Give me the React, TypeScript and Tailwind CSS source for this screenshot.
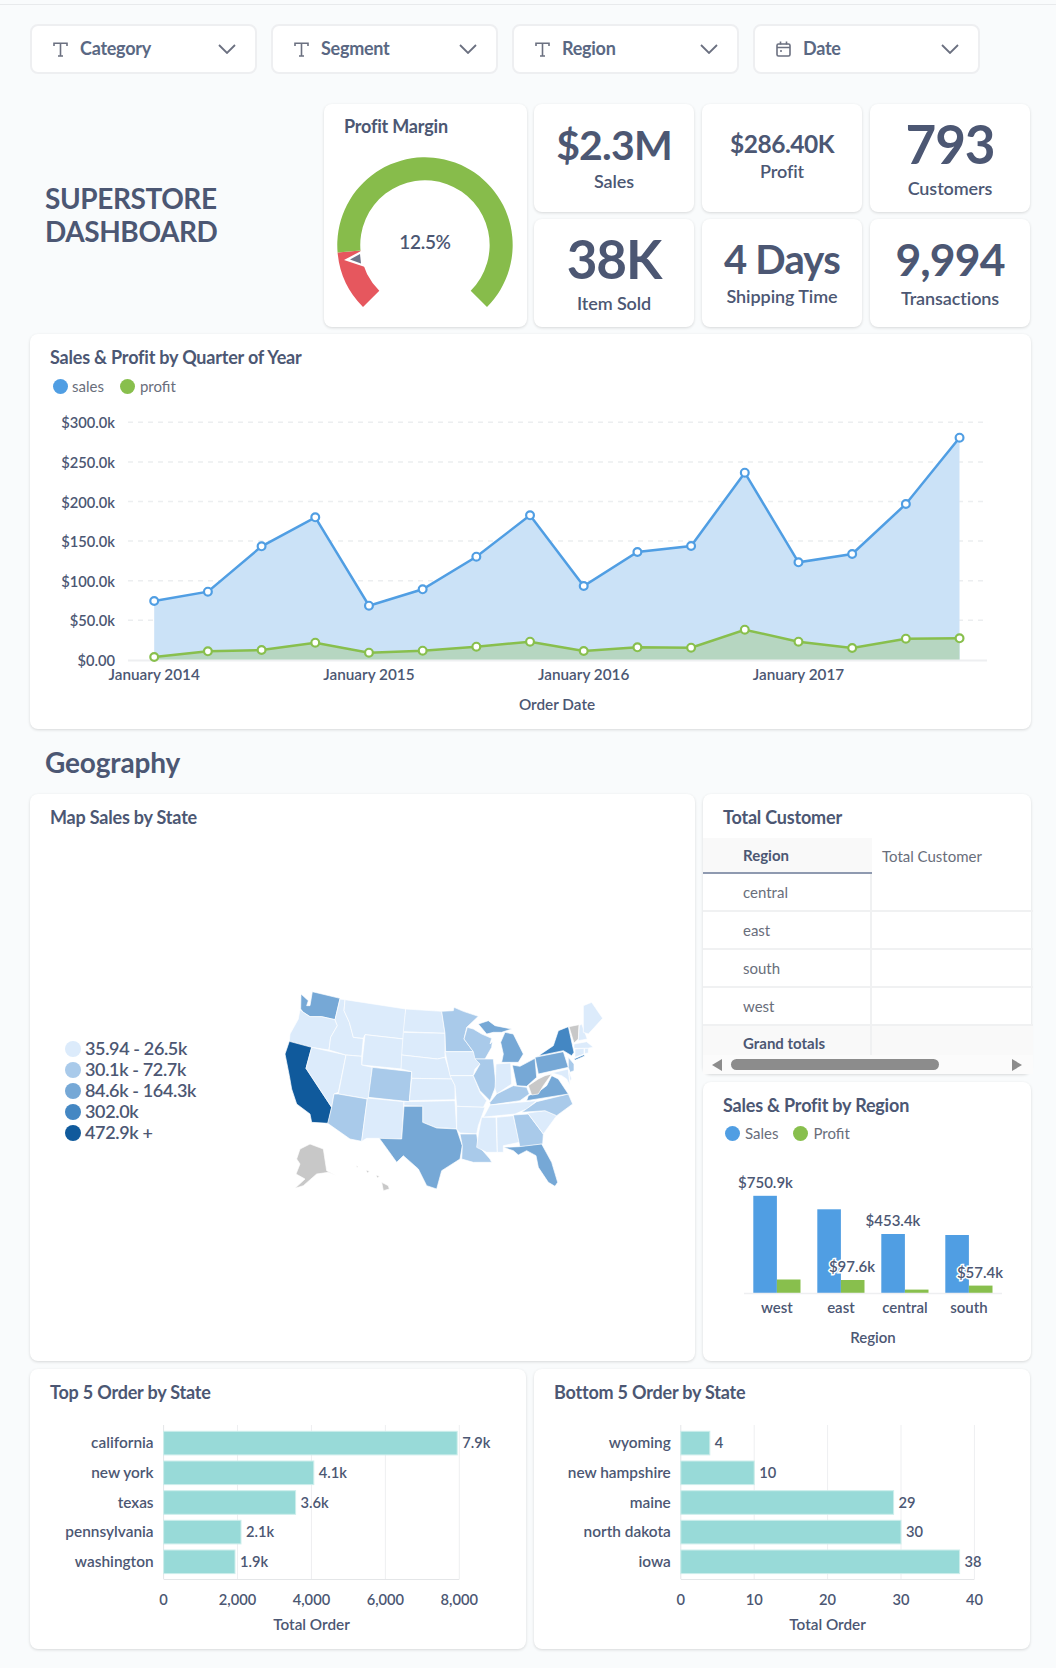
import type { ReactNode } from 'react';

const INK = '#4c5773';
const L1 = '#dcebfb';
const L2 = '#a9caea';
const L3 = '#76a8d6';
const L4 = '#4487c3';
const L5 = '#105a9c';
const NA = '#c8c8c8';

const states: [string, string][] = [
  ['123,45 145,65 140,80 150,80 157,38 240,58 225,122 185,113 150,113 130,100 122,90', L3],
  ['120,92 130,100 150,113 185,113 225,122 232,140 212,175 207,213 155,205 88,187 90,165 115,120', L1],
  ['88,187 155,205 138,268 215,385 205,433 155,430 150,405 110,375 95,330 88,290 75,225', L5],
  ['155,205 258,228 235,340 222,345 215,385 138,268', L1],
  ['240,60 255,62 252,95 268,130 280,175 310,178 305,232 258,228 207,213 212,175 232,140 225,122', L1],
  ['255,62 437,90 432,180 315,167 310,178 280,175 268,130 252,95', L1],
  ['315,167 430,180 425,270 305,258', L1],
  ['258,228 305,232 305,258 337,265 325,360 235,345', L1],
  ['235,345 322,360 305,487 270,480 203,433 215,385 222,345', L2],
  ['337,265 455,278 448,368 325,355', L2],
  ['322,357 432,368 425,480 358,478 320,478 305,487', L1],
  ['437,90 545,97 555,163 430,158', L1],
  ['430,160 555,163 555,235 532,240 425,228', L1],
  ['425,228 532,240 555,235 575,300 455,298 455,278 423,270', L1],
  ['455,298 575,300 585,320 585,362 448,365', L1],
  ['432,368 585,365 590,450 560,447 530,447 488,430 488,382 432,380', L1],
  ['432,382 488,382 488,430 530,447 590,450 607,500 600,540 545,575 530,630 500,620 475,570 430,530 410,550 385,515 358,478 425,480', L3],
  ['545,97 580,95 582,85 610,97 655,112 620,145 612,180 640,218 557,218 555,163', L2],
  ['555,218 640,218 660,255 645,270 640,290 570,290', L1],
  ['570,290 640,290 660,340 680,365 670,385 590,382 585,320', L1],
  ['590,382 675,385 655,440 650,465 600,462 590,450', L1],
  ['600,465 650,465 655,500 690,540 695,550 640,550 605,540 607,500', L2],
  ['622,145 640,150 665,165 695,178 690,195 697,188 695,205 675,240 645,240 640,218 612,180', L2],
  ['645,240 700,240 708,320 690,365 660,335 640,290 660,255', L2],
  ['655,135 685,125 705,140 755,150 725,160 700,160 680,165', L3],
  ['735,160 760,165 775,195 780,205 790,225 775,250 725,250 730,225 722,190', L3],
  ['708,255 752,252 755,315 710,345 705,330', L1],
  ['757,258 780,262 825,238 830,295 800,322 770,320', L3],
  ['690,370 710,345 760,320 800,325 808,345 780,365 690,378', L2],
  ['670,415 690,378 830,365 800,390 765,405 665,415', L1],
  ['665,415 708,415 712,520 680,520 650,505 655,465', L1],
  ['710,415 760,410 778,490 730,500 730,520 712,520', L1],
  ['760,408 805,405 850,465 848,495 780,505', L2],
  ['730,505 778,503 845,495 875,550 893,610 885,622 865,610 835,565 828,530 800,515 775,528 760,515', L3],
  ['803,402 855,395 890,410 850,465', L1],
  ['785,400 830,368 925,345 938,375 890,410 855,395', L2],
  ['800,365 805,350 840,335 860,320 875,290 895,300 925,345', L3],
  ['805,320 835,300 855,290 875,285 850,320 835,345 815,348', NA],
  ['825,235 910,218 925,265 835,285', L3],
  ['840,227 880,200 895,155 925,143 942,220 935,230 910,215 838,230', L4],
  ['942,240 972,227 974,231 946,243', L4],
  ['927,143 957,137 955,180 942,192', NA],
  ['958,140 965,135 982,180 955,185', L1],
  ['970,160 970,80 995,70 1028,118 985,165', L1],
  ['942,195 980,188 1000,205 982,208 942,208', L1],
  ['945,210 972,208 972,225 945,235', L1],
  ['974,208 985,208 985,222 974,224', L1],
  ['925,235 942,255 942,275 930,280 925,265', L2],
  ['850,288 925,270 930,320 920,300 905,290 880,283', L1],
  ['925,270 935,300 930,305', L1],
  ['120,510 150,495 190,510 200,575 260,605 230,590 205,580 170,585 130,620 105,628 135,600 108,585 120,555 110,540', NA],
  ['365,610 385,620 388,630 370,635', NA],
  ['288,560 294,562 292,567', NA],
  ['318,573 328,577 322,582', NA],
  ['348,588 358,592 352,597', NA],
];

const sales = [813, 785, 649, 562, 827, 778, 680, 556, 768, 666, 648, 428, 697, 672, 522, 323];
const profit = [981, 964, 960, 938, 968, 962, 950, 935, 963, 952, 953, 899, 935, 954, 926, 925];
const qx = (i: number) => 154.2 + i * 53.69;
const sy = (z: number) => 330 + z / 3;
const line = (d: number[]) => d.map((z, i) => `${qx(i).toFixed(1)},${sy(z).toFixed(1)}`).join(' ');

function Card({ className, children }: { className: string; children: ReactNode }) {
  return (
    <div className={`rounded-lg bg-white shadow-[0_1px_3px_rgba(0,0,0,0.14)] ${className}`}>{children}</div>
  );
}

function Title({ children }: { children: ReactNode }) {
  return <div className="text-[18px] leading-6 font-bold tracking-[-0.011em] text-[#4c5773]">{children}</div>;
}

function Filter({ label, date }: { label: string; date?: boolean }) {
  return (
    <div className="flex h-[50px] w-[227px] items-center rounded-lg border-2 border-[#eeeff1] bg-white pr-[19px] pl-[21px]">
      {date ? (
        <svg width="15" height="16" viewBox="0 0 15 16" fill="none" stroke="#6b7080" strokeWidth="1.6">
          <rect x="1" y="3" width="13" height="12" rx="1.5" />
          <path d="M1 6.5h13M4.5 0.5v3M10.5 0.5v3" />
          <path d="M4 10h2" />
        </svg>
      ) : (
        <svg width="15" height="15" viewBox="0 0 15 15" fill="none" stroke="#6b7080" strokeWidth="1.6">
          <path d="M1 4V1.2h13V4M7.5 1.2V14M5 14h5" />
        </svg>
      )}
      <span className="ml-[12px] pb-[2px] text-[18px] font-bold tracking-[-0.015em] text-[#5a6883]">{label}</span>
      <svg className="ml-auto" width="18" height="10" viewBox="0 0 18 10" fill="none" stroke="#6b7080" strokeWidth="1.8">
        <path d="M1 1l8 8 8-8" />
      </svg>
    </div>
  );
}

function Kpi({ value, label, box, valueClass, labelClass }: { value: string; label: string; box: string; valueClass: string; labelClass: string }) {
  return (
    <Card className={`h-[108px] w-[160px] text-center ${box}`}>
      <div className={`font-bold tracking-[-0.02em] text-[#4c5773] ${valueClass}`}>{value}</div>
      <div className={`text-[18px] leading-6 font-semibold tracking-[-0.005em] text-[#4c5773] ${labelClass}`}>{label}</div>
    </Card>
  );
}

function arc(r1: number, r2: number, a: number, b: number) {
  const cx = 425;
  const cy = 245;
  const p = (r: number, t: number) => {
    const q = (t * Math.PI) / 180;
    return `${(cx + r * Math.sin(q)).toFixed(1)} ${(cy - r * Math.cos(q)).toFixed(1)}`;
  };
  const large = b - a > 180 ? 1 : 0;
  return `M${p(r1, a)} A${r1} ${r1} 0 ${large} 1 ${p(r1, b)} L${p(r2, b)} A${r2} ${r2} 0 ${large} 0 ${p(r2, a)} Z`;
}

function Gauge() {
  return (
    <svg className="block" width="203" height="183" viewBox="324 144 203 183">
      <path d={arc(87.7, 64.7, 225, 265)} fill="#e6575e" />
      <path d={arc(87.7, 64.7, 265, 495)} fill="#87bc4b" />
      <polygon points="344,260 361,251 365,267" fill="#fff" />
      <polygon points="350,259.5 360,254 361,263.5" fill="#6d7489" />
      <text x="425" y="249" textAnchor="middle" fontSize="19" fontWeight="600" letterSpacing="-0.3" fill={INK}>12.5%</text>
    </svg>
  );
}

function QuarterChart() {
  const ticks = ['$300.0k', '$250.0k', '$200.0k', '$150.0k', '$100.0k', '$50.0k'];
  const xl = [['January 2014', 0], ['January 2015', 4], ['January 2016', 8], ['January 2017', 12]] as const;
  const pts = line(sales);
  const ptp = line(profit);
  const last = qx(15).toFixed(1);
  const first = qx(0).toFixed(1);
  const t = { fontWeight: 600, fill: INK };
  return (
    <svg className="block" width="1001" height="329" viewBox="30 400 1001 329">
      {ticks.map((s, i) => {
        const y = 422.3 + i * 39.6;
        return (
          <g key={s}>
            <line x1="128" x2="984" y1={y} y2={y} stroke="#eceef0" strokeWidth="1.5" strokeDasharray="5 5" />
            <text {...t} x="115" y={y + 6} textAnchor="end" fontSize="14.7">{s}</text>
          </g>
        );
      })}
      <text {...t} x="115" y="666" textAnchor="end" fontSize="14.7">$0.00</text>
      <polygon points={`${first},660 ${pts} ${last},660`} fill="#cbe2f7" />
      <polygon points={`${first},660 ${ptp} ${last},660`} fill="#b6d6c1" />
      <line x1="128" x2="987" y1="660.5" y2="660.5" stroke="#eeeff1" strokeWidth="2" />
      <polyline points={pts} fill="none" stroke="#509ee3" strokeWidth="2.5" />
      <polyline points={ptp} fill="none" stroke="#88bf4d" strokeWidth="2.5" />
      {sales.map((z, i) => (
        <circle key={i} cx={qx(i)} cy={sy(z)} r="3.9" fill="#fff" stroke="#509ee3" strokeWidth="2.2" />
      ))}
      {profit.map((z, i) => (
        <circle key={i} cx={qx(i)} cy={sy(z)} r="3.9" fill="#fff" stroke="#88bf4d" strokeWidth="2.2" />
      ))}
      {xl.map(([s, i]) => (
        <text {...t} key={s} x={qx(i)} y="680" textAnchor="middle" fontSize="15.3">{s}</text>
      ))}
      <text {...t} x="557" y="710" textAnchor="middle" fontSize="15.3">Order Date</text>
    </svg>
  );
}

function UsMap() {
  return (
    <svg className="mt-[150px] block shrink-0" width="360" height="220" viewBox="0 0 1080 660">
      {states.map(([p, c], i) => (
        <polygon key={i} points={p} fill={c} stroke="#fff" strokeWidth="2" strokeLinejoin="round" />
      ))}
    </svg>
  );
}

function RegionBars() {
  const bars: [string, number, number, number][] = [
    ['west', 753.3, 1195.8, 1279.5],
    ['east', 817.3, 1209.3, 1280],
    ['central', 881.3, 1234, 1289.6],
    ['south', 945.3, 1235, 1285.6],
  ];
  const lab = { textAnchor: 'middle' as const, fontSize: 15, fontWeight: 600, fill: INK };
  return (
    <svg className="block" width="328" height="214" viewBox="703 1147 328 214">
      {bars.map(([n, x, a, b]) => (
        <g key={n}>
          <rect x={x} y={a} width="23.6" height={1293 - a} fill="#509ee3" />
          <rect x={x + 23.6} y={b} width="23.6" height={1293 - b} fill="#88bf4d" />
          <text {...lab} x={x + 23.6} y="1313">{n}</text>
        </g>
      ))}
      <line x1="744" x2="1002" y1="1293.5" y2="1293.5" stroke="#eeeff1" strokeWidth="1.5" />
      <text {...lab} x="765.5" y="1188">$750.9k</text>
      <text {...lab} x="893" y="1226">$453.4k</text>
      <text {...lab} x="852" y="1272" stroke="#fff" strokeWidth="3" paintOrder="stroke">$97.6k</text>
      <text {...lab} x="980" y="1278" stroke="#fff" strokeWidth="3" paintOrder="stroke">$57.4k</text>
      <text {...lab} x="873" y="1343">Region</text>
    </svg>
  );
}

type Row = [string, number, string];

function OrderBars({ x0, x1, ox, oy, rows, ticks, labelX }: { x0: number; x1: number; ox: number; oy: number; rows: Row[]; ticks: string[]; labelX: number }) {
  const w = 496;
  const tops = [1431.3, 1461, 1490.7, 1520.3, 1550];
  const step = (x1 - x0) / (ticks.length - 1);
  const txt = { fontSize: 14.7, fontWeight: 600, fill: INK };
  return (
    <svg className="block" width={w} height="244" viewBox={`${ox} ${oy} ${w} 244`}>
      {ticks.map((t, i) => (
        <g key={t}>
          <line x1={x0 + step * i} x2={x0 + step * i} y1="1425" y2="1579" stroke={i === 0 ? '#e4e6e8' : '#eeeff1'} />
          <text {...txt} textAnchor="middle" x={x0 + step * i} y="1605">{t}</text>
        </g>
      ))}
      <line x1={x0} x2={x1} y1="1579.5" y2="1579.5" stroke="#e4e6e8" />
      {rows.map(([n, end, v], i) => (
        <g key={n}>
          <rect x={x0} y={tops[i]} width={end - x0} height="23.6" fill="#98dad8" stroke="#cdeeec" />
          <text {...txt} fontSize="15.4" textAnchor="end" x={x0 - 10} y={tops[i] + 17}>{n}</text>
          <text {...txt} x={end + 5} y={tops[i] + 17}>{v}</text>
        </g>
      ))}
      <text {...txt} fontSize="15.3" textAnchor="middle" x={labelX} y="1630">Total Order</text>
    </svg>
  );
}

function TableRow({ label, shade, bold, clipped }: { label: string; shade?: boolean; bold?: boolean; clipped?: boolean }) {
  return (
    <div className={`flex ${clipped ? 'h-[29px]' : 'h-[38px] border-b-2 border-[#f0f1f2]'} ${shade ? 'bg-[#f9f9f9]' : ''}`}>
      <div className={`flex w-[169px] items-center border-r-2 border-[#f0f1f2] pl-10 text-[15px] ${bold ? 'pt-[6px] font-bold text-[#4c5773]' : 'text-[#696e7b]'}`}>
        {label}
      </div>
    </div>
  );
}

const legendItems: [string, string][] = [
  ['bg-[#dcebfb]', '35.94 - 26.5k'],
  ['bg-[#a9caea]', '30.1k - 72.7k'],
  ['bg-[#76a8d6]', '84.6k - 164.3k'],
  ['bg-[#4487c3]', '302.0k'],
  ['bg-[#105a9c]', '472.9k +'],
];

export default function App() {
  return (
    <div className="min-h-[1668px] w-[1056px] bg-[#f9fbfc] text-[#4c5773] [font-family:Lato,sans-serif]">
      <div className="h-[5px] border-b border-[#e8eaec]" />
      <div className="mt-[19px] flex gap-[14px] pl-[30px]">
        <Filter label="Category" />
        <Filter label="Segment" />
        <Filter label="Region" />
        <Filter label="Date" date />
      </div>

      <div className="pl-[30px]">
        <div className="mt-[30px] flex">
          <div className="flex w-[294px] items-center pl-[15px] text-[28px] leading-[33px] font-bold tracking-[-0.015em]">
            <div className="pb-[2px]">
              SUPERSTORE
              <br />
              DASHBOARD
            </div>
          </div>
          <Card className="h-[223px] w-[203px]">
            <div className="px-5 pt-[10px] pb-[6px]">
              <Title>Profit Margin</Title>
            </div>
            <Gauge />
          </Card>
          <div className="ml-[7px] grid grid-cols-[160px_160px_160px] grid-rows-[108px_108px] gap-x-2 gap-y-[7px]">
            <Kpi value="$2.3M" label="Sales" box="pt-[17px]" valueClass="text-[41px] leading-[48px]" labelClass="" />
            <Kpi value="$286.40K" label="Profit" box="pt-6" valueClass="text-[24.5px] leading-8" labelClass="-mt-px" />
            <Kpi value="793" label="Customers" box="pt-3" valueClass="text-[53px] leading-[56px]" labelClass="mt-1" />
            <Kpi value="38K" label="Item Sold" box="pt-3" valueClass="text-[53px] leading-[56px]" labelClass="mt-1" />
            <Kpi value="4 Days" label="Shipping Time" box="pt-4" valueClass="text-[40px] leading-[48px]" labelClass="mt-px" />
            <Kpi value="9,994" label="Transactions" box="pt-4" valueClass="text-[44.5px] leading-[48px]" labelClass="mt-[3px]" />
          </div>
        </div>

        <Card className="mt-[7px] h-[395px] w-[1001px]">
          <div className="px-5 pt-[11px]">
            <Title>Sales &amp; Profit by Quarter of Year</Title>
            <div className="mt-[3px] flex h-7 items-center pl-[3px] text-[15px] text-[#696e7b]">
              <span className="h-[15px] w-[15px] rounded-full bg-[#509ee3]" />
              <span className="ml-[4px]">sales</span>
              <span className="ml-[16px] h-[15px] w-[15px] rounded-full bg-[#88bf4d]" />
              <span className="ml-[5px]">profit</span>
            </div>
          </div>
          <QuarterChart />
        </Card>

        <div className="flex h-[65px] items-center pt-px pl-[15px] text-[28px] font-bold tracking-[-0.005em]">Geography</div>

        <div className="flex h-[567px] w-[1001px] gap-2">
          <Card className="w-[665px]">
            <div className="px-5 pt-[11px]">
              <Title>Map Sales by State</Title>
            </div>
            <div className="flex pl-[35px]">
              <div className="mt-[209px] w-[195px] shrink-0">
                {legendItems.map(([c, t]) => (
                  <div key={t} className="flex h-[21px] items-center text-[18px] font-semibold tracking-[-0.02em]">
                    <span className={`h-4 w-4 rounded-full ${c}`} />
                    <span className="ml-[4px]">{t}</span>
                  </div>
                ))}
              </div>
              <UsMap />
            </div>
          </Card>

          <div className="flex w-[328px] flex-col gap-2">
            <Card className="h-[280px]">
              <div className="h-11 px-5 pt-[11px]">
                <Title>Total Customer</Title>
              </div>
              <div className="w-[330px]">
                <div className="flex h-9">
                  <div className="flex w-[169px] items-center border-b-2 border-[#8f9ab0] bg-[#f9f9f9] pl-10 text-[15px] font-bold">Region</div>
                  <div className="flex flex-1 items-center pl-[10px] text-[15px] text-[#696e7b]">Total Customer</div>
                </div>
                <TableRow label="central" />
                <TableRow label="east" />
                <TableRow label="south" />
                <TableRow label="west" />
                <TableRow label="Grand totals" shade bold clipped />
                <div className="flex h-[19px] items-center bg-[#fbfbfb] pl-[9px]">
                  <span className="h-0 w-0 border-y-[6px] border-r-[10px] border-y-transparent border-r-[#8c8c8c]" />
                  <span className="ml-[9px] h-[11px] w-[208px] rounded-full bg-[#8c8c8c]" />
                  <span className="ml-[73px] h-0 w-0 border-y-[6px] border-l-[10px] border-y-transparent border-l-[#8c8c8c]" />
                </div>
              </div>
            </Card>
            <Card className="h-[279px]">
              <div className="px-5 pt-[11px]">
                <Title>Sales &amp; Profit by Region</Title>
                <div className="mt-[2px] flex h-7 items-center pl-[2px] text-[15px] text-[#696e7b]">
                  <span className="h-[15px] w-[15px] rounded-full bg-[#509ee3]" />
                  <span className="ml-[5px]">Sales</span>
                  <span className="ml-[15px] h-[15px] w-[15px] rounded-full bg-[#88bf4d]" />
                  <span className="ml-[5px]">Profit</span>
                </div>
              </div>
              <RegionBars />
            </Card>
          </div>
        </div>

        <div className="mt-2 flex h-[280px] w-[1001px] gap-2">
          <Card className="w-[496px]">
            <div className="h-9 px-5 pt-[11px]">
              <Title>Top 5 Order by State</Title>
            </div>
            <OrderBars
              x0={163.6}
              x1={459.3}
              ox={30}
              oy={1405}
              labelX={311.5}
              ticks={['0', '2,000', '4,000', '6,000', '8,000']}
              rows={[
                ['california', 457.2, '7.9k'],
                ['new york', 313.8, '4.1k'],
                ['texas', 295.6, '3.6k'],
                ['pennsylvania', 241, '2.1k'],
                ['washington', 235, '1.9k'],
              ]}
            />
          </Card>
          <Card className="w-[496px]">
            <div className="h-9 pt-[11px] pl-[20px]">
              <Title>Bottom 5 Order by State</Title>
            </div>
            <OrderBars
              x0={680.8}
              x1={974.4}
              ox={534}
              oy={1405}
              labelX={827.6}
              ticks={['0', '10', '20', '30', '40']}
              rows={[
                ['wyoming', 709.8, '4'],
                ['new hampshire', 754.2, '10'],
                ['maine', 893.6, '29'],
                ['north dakota', 901, '30'],
                ['iowa', 959.6, '38'],
              ]}
            />
          </Card>
        </div>
      </div>
    </div>
  );
}
